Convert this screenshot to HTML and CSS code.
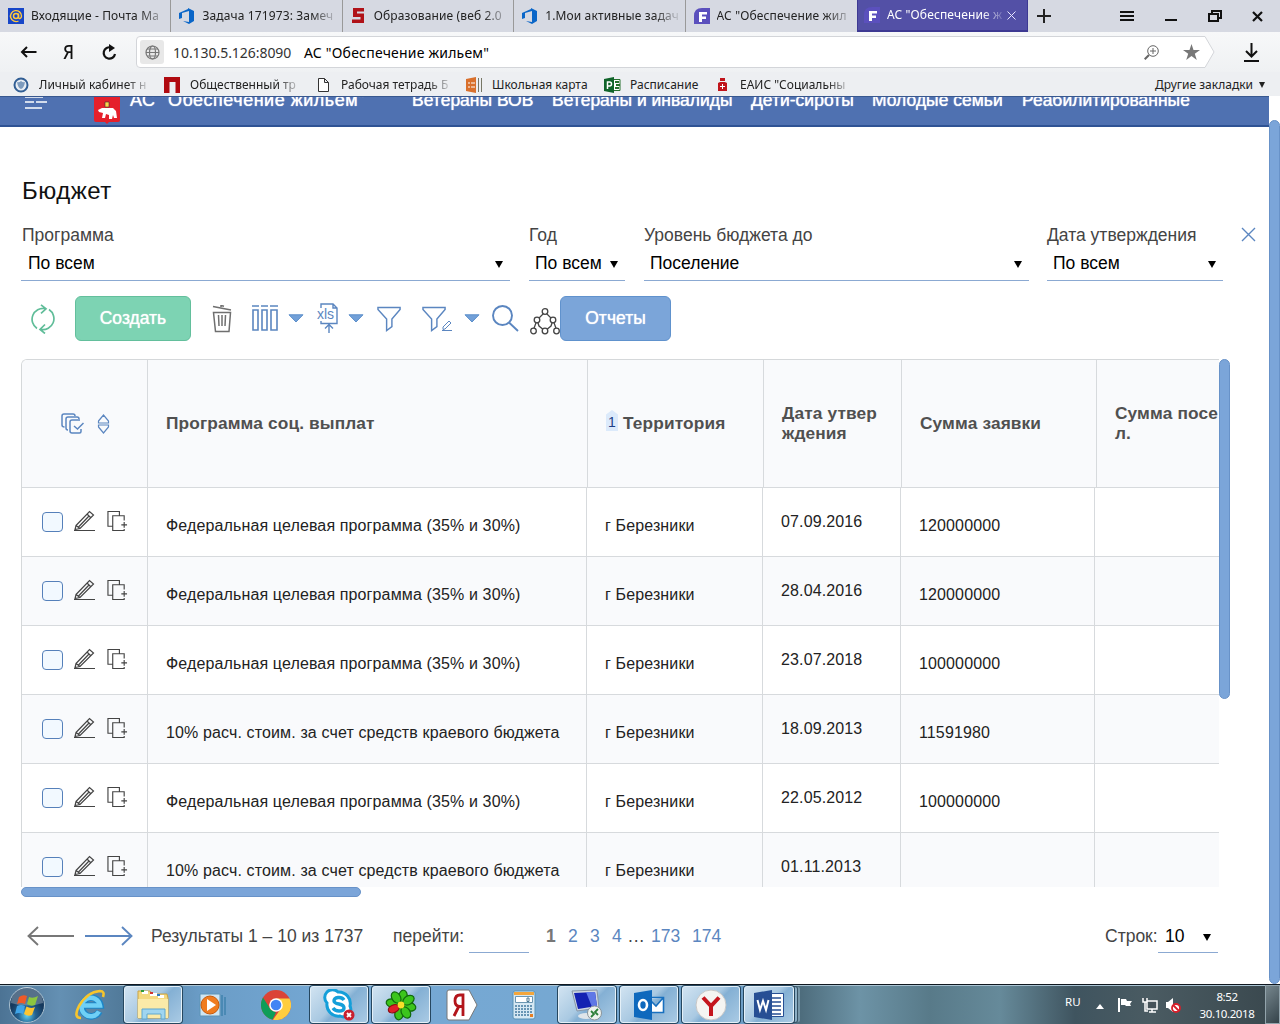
FILE: index.html
```html
<!DOCTYPE html>
<html lang="ru">
<head>
<meta charset="utf-8">
<title>АС "Обеспечение жильем"</title>
<link rel="stylesheet" href="styles.css">
</head>
<body>
<svg class="defs" width="0" height="0">
  <symbol id="i-devops" viewBox="0 0 16 16"><path fill="#0a66c8" d="M0 5 9 1V0l6 3v10l-5 3-6-3 6 1V3L3 5v5l-3 1z"/></symbol>
  <symbol id="i-f" viewBox="0 0 16 16"><path class="fbg" d="M0 16V8q0-8 8-8h8v16z"/><path fill="#fff" d="M5 4h8v2.500H8v2h4v2.500H8V14H5z"/></symbol>
  <symbol id="i-caret" viewBox="0 0 16 9"><path fill="#72a0d8" stroke="#5d8fcb" d="M1 .8h14L8 8z"/></symbol>
  <symbol id="i-funnel" viewBox="0 0 26 26"><path fill="none" stroke="#5b86c0" stroke-width="1.500" d="M1 1h23v2l-8.500 10v8L10 25V13L1 3z"/></symbol>
  <symbol id="i-edit" viewBox="0 0 22 22"><path fill="none" stroke="#444" stroke-width="1.200" d="M2 15.500 15.500 1.500l4 3.500L6 18.500l-5 1zM13 4l4 4M4.500 17 15 6M2 15.500l4 3M0 20.500h21"/></symbol>
  <symbol id="i-copy" viewBox="0 0 22 22"><path fill="none" stroke="#444" stroke-width="1.200" d="M6 16.500H1V1h12v4.500M18 10.500V5.500H6v15.500h9M18 12v6m-3-3h6M15 21h3v-1.500"/></symbol>
</svg>

<header class="browser">
  <div class="tabs">
    <div class="tab"><svg class="fav" viewBox="0 0 16 16"><path fill="#1746c8" d="M0 0h16v16H0z"/><circle cx="8" cy="8" r="2.500" fill="none" stroke="#ffc83c" stroke-width="1.500"/><path fill="none" stroke="#ffc83c" stroke-width="1.400" d="M10.500 5.500V9q0 1.600 1.500 1.500 1.500-.5 1.500-2.500a5.500 5.500 0 1 0-3 5"/></svg><span class="tab-text t1">Входящие - Почта Ма</span></div>
    <div class="tab"><svg class="fav"><use href="#i-devops"/></svg><span class="tab-text t2">Задача 171973: Замеч</span></div>
    <div class="tab"><svg class="fav" viewBox="0 0 16 16"><path fill="#b01218" d="M2 0h11v3.500H6v2h7V15H1v-3.500h8.500V9H2z"/></svg><span class="tab-text t3">Образование (веб 2.0</span></div>
    <div class="tab"><svg class="fav"><use href="#i-devops"/></svg><span class="tab-text t4">1.Мои активные задач</span></div>
    <div class="tab"><svg class="fav"><use href="#i-f"/></svg><span class="tab-text t5">АС "Обеспечение жил</span></div>
    <div class="tab active"><svg class="fav"><use href="#i-f"/></svg><span class="tab-text t6">АС "Обеспечение ж</span><svg class="tab-x" viewBox="0 0 9 9"><path stroke="#e8e6ff" d="m.5.5 8 8m0-8-8 8"/></svg></div>
    <svg class="tab-plus" viewBox="0 0 14 14"><path stroke="#222" stroke-width="2" d="M7 0v14M0 7h14"/></svg>
    <div class="win">
      <svg width="14" height="12" viewBox="0 0 14 12"><path stroke="#111" stroke-width="2" d="M0 2h14M0 6h14M0 10h14"/></svg>
      <svg width="12" height="12" viewBox="0 0 12 12"><path stroke="#111" stroke-width="2" d="M0 10h12"/></svg>
      <svg width="14" height="12" viewBox="0 0 14 12"><path fill="none" stroke="#111" stroke-width="2" d="M1 4h9v7H1zM4 4V1h9v7h-3"/></svg>
      <svg width="11" height="11" viewBox="0 0 11 11"><path stroke="#111" stroke-width="2.200" d="m1 1 9 9m0-9-9 9"/></svg>
    </div>
  </div>
  <div class="toolbar">
    <div class="nav">
      <svg width="17" height="12" viewBox="0 0 17 12"><path fill="none" stroke="#111" stroke-width="2" d="M16.500 6H2M7 1 2 6l5 5"/></svg>
      <span class="ya">Я</span>
      <svg width="16" height="17" viewBox="0 0 16 17"><path fill="none" stroke="#111" stroke-width="2.200" d="M10 3.500A5.700 5.700 0 1 0 14 10"/><path fill="#111" d="m8 0 6 4-6 4z"/></svg>
    </div>
    <div class="omni">
      <svg class="omni-bg" width="1079" height="32" viewBox="0 0 1079 32"><path fill="#fff" stroke="#d3d5d9" d="M4 .5h1065l9 15.500-9 15.500H4Q.5 31.500.5 28V4Q.5.500 4 .500z"/></svg>
      <span class="globe"><svg width="15" height="15" viewBox="0 0 15 15"><g fill="none" stroke="#777" stroke-width="1.200"><circle cx="7.500" cy="7.500" r="6.500"/><ellipse cx="7.500" cy="7.500" rx="3" ry="6.500"/><path d="M1 7.500h13M2 4h11M2 11h11"/></g></svg></span>
      <span class="url">10.130.5.126:8090</span>
      <span class="ptitle">АС "Обеспечение жильем"</span>
      <svg class="zoomer" width="15" height="15" viewBox="0 0 15 15"><g fill="none" stroke="#666"><circle cx="9" cy="6" r="5.300"/><path d="M9 3v6M6 6h6"/><path stroke-width="2" d="m5 10-4.300 4.300"/></g></svg>
      <svg class="star" width="17" height="16" viewBox="0 0 17 16"><path fill="#777" d="m8.500 0 2 6h6.500l-5.200 3.700 2 6.300-5.300-3.900L3.200 16l2-6.300L0 6h6.500z"/></svg>
    </div>
    <svg class="dl" width="15" height="19" viewBox="0 0 15 19"><path fill="none" stroke="#111" stroke-width="2" d="M7.500 0v13M2 8l5.500 5.500L13 8M0 18h15"/></svg>
  </div>
  <div class="marks">
    <div class="mark m1"><svg width="16" height="16" viewBox="0 0 16 16"><circle cx="8" cy="8" r="6.500" fill="#e8edf3" stroke="#315e94" stroke-width="2"/><path fill="#7d9bbd" d="M4 5q2 1 4-1 2 2 4 1-1 6-4 7-3-1-4-7z"/></svg><span class="mt">Личный кабинет н</span></div>
    <div class="mark m2"><svg width="16" height="16" viewBox="0 0 16 16"><path fill="#b00a10" d="M0 0h16v16h-4.500V5h-6v11H0z"/></svg><span class="mt">Общественный тр</span></div>
    <div class="mark m3"><svg width="11" height="14" viewBox="0 0 11 14"><path fill="#fff" stroke="#333" d="M.5.500h6l4 4v9H.5zM6.500.500v4h4"/></svg><span class="mt">Рабочая тетрадь Б</span></div>
    <div class="mark m4"><svg width="17" height="16" viewBox="0 0 17 16"><path fill="#d9702c" d="m0 2 10-2v16L0 14z"/><path stroke="#fff" d="M2 6h2m1 0h4M2 10h2m1 0h4"/><path stroke="#776" d="M12.500 1v14M15.500 1v14"/></svg><span class="mt">Школьная карта</span></div>
    <div class="mark m5"><svg width="17" height="16" viewBox="0 0 17 16"><path fill="#fff" stroke="#26702d" d="M9 2.500h7v11H9z"/><path stroke="#26702d" stroke-width="2" d="M11 5h4m-3 3h4m-5 3h4"/><path fill="#10642a" d="m0 2 10-2v16L0 14z"/><path fill="none" stroke="#fff" stroke-width="1.500" d="M3.500 12V5h2q2 0 2 2t-2 2h-2"/></svg><span class="mt">Расписание</span></div>
    <div class="mark m6"><svg width="9" height="14" viewBox="0 0 9 14"><path fill="#c0141b" d="M2 0h5v3H2zM0 5l2-1h5l2 1v8H0z"/><path stroke="#fff" d="M4.500 6v5M2 8.500h5"/></svg><span class="mt">ЕАИС "Социальны</span></div>
    <div class="mark other"><span class="mt">Другие закладки</span><svg width="6" height="6" viewBox="0 0 6 6"><path fill="#222" d="M0 0h6L3 6z"/></svg></div>
  </div>
</header>

<div class="viewport">
  <div class="page">
    <nav class="sitebar">
      <svg class="burger" width="22" height="13" viewBox="0 0 22 13"><path stroke="#fff" stroke-width="1.300" d="M0 1h18M0 6h9m2 0h11M0 12h17"/></svg>
      <svg class="crest" width="26" height="29" viewBox="0 0 26 29"><path fill="#e5202b" d="M0 0h26v24q0 2-2 2H15l-2 2-2-2H2q-2 0-2-2z"/><path fill="#ffd34a" stroke="#333" stroke-width=".6" d="M11 6h4v5h-4z"/><path fill="#fff" d="m4 14 4-2 11 0 3 3 1 7h-3l-1-3-1 4h-3v-4l-3-1-1 4H8l1-5-4-1z"/></svg>
      <span class="brand">АС "Обеспечение жильем"</span>
      <span class="ln l1">Ветераны ВОВ</span><span class="ln l2">Ветераны и инвалиды</span><span class="ln l3">Дети-сироты</span><span class="ln l4">Молодые семьи</span><span class="ln l5">Реабилитированные</span>
    </nav>
    <main>
      <h1>Бюджет</h1>
      <div class="filters">
        <div class="filter f1"><label>Программа</label><div class="sel"><span>По всем</span><i></i></div></div>
        <div class="filter f2"><label>Год</label><div class="sel"><span>По всем</span><i></i></div></div>
        <div class="filter f3"><label>Уровень бюджета до</label><div class="sel"><span>Поселение</span><i></i></div></div>
        <div class="filter f4"><label>Дата утверждения</label><div class="sel"><span>По всем</span><i></i></div></div>
        <svg class="close" width="15" height="15" viewBox="0 0 15 15"><path stroke="#5b86c0" stroke-width="1.400" d="m1 1 13 13m0-13L1 14"/></svg>
      </div>
      <div class="actions">
        <svg class="refresh" width="24" height="30" viewBox="0 0 24 30"><path fill="none" stroke="#60bd99" stroke-width="1.700" d="M6 24.500A11 11 0 0 1 14 4.500M10 .8l5 4-5 4.500M18 5.500a11 11 0 0 1-8 20M14 20.500l-5 5 5 4"/></svg>
        <button class="btn green">Создать</button>
        <svg class="trash" width="20" height="28" viewBox="0 0 20 28"><path fill="none" stroke="#6f6f6f" stroke-width="1.500" d="M1 1.500 19 5M9 2V.5l3 .8M1.500 7.500h17L17 26.500H3.500zM6.500 10l.5 11M10 10v11M13.500 10l-.5 11"/></svg>
        <svg class="cols" width="27" height="27" viewBox="0 0 27 27"><path fill="none" stroke="#5b86c0" stroke-width="1.600" d="M0 1h7m2 0h7m2 0h8M1 5h5v20H1zM10 5h5v20h-5zM19 5h6v20h-6z"/></svg>
        <svg class="car c1"><use href="#i-caret"/></svg>
        <svg class="xls" width="21" height="31" viewBox="0 0 21 31"><path fill="none" stroke="#5b86c0" stroke-width="1.400" d="M4 5V1h12l4 4v15.500H4V18M16 1v4h4M12 30v-8.500M8 25.500l4-4 4 4"/><text x="0" y="16" class="xt">xls</text></svg>
        <svg class="car c2"><use href="#i-caret"/></svg>
        <svg class="fun u1"><use href="#i-funnel"/></svg>
        <svg class="fun u2"><use href="#i-funnel"/></svg>
        <svg class="minied" width="11" height="11" viewBox="0 0 11 11"><path fill="none" stroke="#5b86c0" d="m1 7 6-6 2 2-6 6-2 .5zM0 10.500h10"/></svg>
        <svg class="car c3"><use href="#i-caret"/></svg>
        <svg class="lens" width="27" height="27" viewBox="0 0 27 27"><path fill="none" stroke="#5b86c0" stroke-width="1.900" d="M20 10.500a9.500 9.500 0 1 1-19 0 9.500 9.500 0 0 1 19 0zM17 17.500l9 8.500"/></svg>
        <svg class="tree" width="30" height="27" viewBox="0 0 30 27"><g fill="#fff" stroke="#444" stroke-width="1.300"><path fill="none" d="m15 4-8 8-4 11M15 4l8 8 4 11M7 12l2 6 6 5 6-5 2-6"/><circle cx="15" cy="3.500" r="2.800"/><circle cx="7" cy="12" r="2.800"/><circle cx="23" cy="12" r="2.800"/><circle cx="3.500" cy="23" r="2.800"/><circle cx="15" cy="23" r="2.800"/><circle cx="26.500" cy="23" r="2.800"/></g></svg>
        <button class="btn blue">Отчеты</button>
      </div>

      <div class="gridwrap">
        <div class="grid">
          <div class="row head">
            <div class="c tools"><svg width="23" height="22" viewBox="0 0 23 22"><path fill="none" stroke="#5b86c0" stroke-width="1.500" d="M3.500 14Q1 14 1 12V3q0-2 2-2h9q2 0 2 2M7 17q-2 0-2-2V6q0-2 2-2h9q2 0 2 2M20 16v2.500q0 1.500-1.500 1.500H11q-2 0-2-2V9q0-2 2-2h8M13 13l3.500 3 6-6"/></svg><svg class="sort" width="13" height="20" viewBox="0 0 13 20"><path fill="none" stroke="#5b86c0" stroke-width="1.200" d="M1.500 7 6.500 1l5 6v2h-10zM1.500 13l5 6 5-6v-2h-10z"/></svg></div>
            <div class="c prog">Программа соц. выплат</div>
            <div class="c terr"><span class="ord">1</span><span>Территория</span></div>
            <div class="c date">Дата утвер<br>ждения</div>
            <div class="c sum">Сумма заявки</div>
            <div class="c last">Сумма посе<br>л.</div>
          </div>
          <div class="row"><div class="c tools"><i class="cb"></i><svg><use href="#i-edit"/></svg><svg class="cp"><use href="#i-copy"/></svg></div><div class="c prog">Федеральная целевая программа (35% и 30%)</div><div class="c terr">г Березники</div><div class="c date">07.09.2016</div><div class="c sum">120000000</div><div class="c last"></div></div>
          <div class="row"><div class="c tools"><i class="cb"></i><svg><use href="#i-edit"/></svg><svg class="cp"><use href="#i-copy"/></svg></div><div class="c prog">Федеральная целевая программа (35% и 30%)</div><div class="c terr">г Березники</div><div class="c date">28.04.2016</div><div class="c sum">120000000</div><div class="c last"></div></div>
          <div class="row"><div class="c tools"><i class="cb"></i><svg><use href="#i-edit"/></svg><svg class="cp"><use href="#i-copy"/></svg></div><div class="c prog">Федеральная целевая программа (35% и 30%)</div><div class="c terr">г Березники</div><div class="c date">23.07.2018</div><div class="c sum">100000000</div><div class="c last"></div></div>
          <div class="row"><div class="c tools"><i class="cb"></i><svg><use href="#i-edit"/></svg><svg class="cp"><use href="#i-copy"/></svg></div><div class="c prog">10% расч. стоим. за счет средств краевого бюджета</div><div class="c terr">г Березники</div><div class="c date">18.09.2013</div><div class="c sum">11591980</div><div class="c last"></div></div>
          <div class="row"><div class="c tools"><i class="cb"></i><svg><use href="#i-edit"/></svg><svg class="cp"><use href="#i-copy"/></svg></div><div class="c prog">Федеральная целевая программа (35% и 30%)</div><div class="c terr">г Березники</div><div class="c date">22.05.2012</div><div class="c sum">100000000</div><div class="c last"></div></div>
          <div class="row"><div class="c tools"><i class="cb"></i><svg><use href="#i-edit"/></svg><svg class="cp"><use href="#i-copy"/></svg></div><div class="c prog">10% расч. стоим. за счет средств краевого бюджета</div><div class="c terr">г Березники</div><div class="c date">01.11.2013</div><div class="c sum"></div><div class="c last"></div></div>
        </div>
        <div class="vbar"></div>
      </div>
      <div class="hbar"></div>

      <div class="pager">
        <svg width="48" height="20" viewBox="0 0 48 20"><path fill="none" stroke="#777" stroke-width="1.900" d="M47 10H1M11 1 1.500 10l9.500 9"/></svg>
        <svg class="next" width="48" height="20" viewBox="0 0 48 20"><path fill="none" stroke="#5b86c0" stroke-width="1.900" d="M0 10h46M37 1l9.500 9-9.500 9"/></svg>
        <span class="res">Результаты 1 – 10 из 1737</span>
        <span class="go">перейти:</span><span class="inp"></span>
        <b>1</b><a>2</a><a>3</a><a>4</a><span class="dots">...</span><a class="p173">173</a><a class="p174">174</a>
        <span class="rows">Строк:</span><div class="sel rs"><span>10</span><i></i></div>
      </div>
    </main>
  </div>
  <div class="pagebar"><div class="thumb"></div></div>
</div>

<footer class="taskbar">
  <div class="start"><svg width="38" height="38" viewBox="0 0 38 38"><defs><radialGradient id="orb" cx=".5" cy=".8"><stop offset="0" stop-color="#5fd2f2"/><stop offset=".5" stop-color="#24618f"/><stop offset="1" stop-color="#16395d"/></radialGradient></defs><circle cx="19" cy="19" r="17.500" fill="url(#orb)" stroke="#a9c0cf"/><path fill="#fff" opacity=".28" d="M3 17a16 16 0 0 1 32 0q-16 5-32 0z"/><path fill="#ef5a28" d="M11 11q4-3 8-1l-2 8q-4-2-8 0z"/><path fill="#8dc63f" d="M21 11q4 2 9-1l-3 9q-4 2-8-1z"/><path fill="#3fa4e8" d="M9 20q4-2 8 0l-2 8q-4-2-8 0z"/><path fill="#fdc52f" d="M18.500 20.500q4 2.500 8.500.5l-3 8q-4 2-8-1z"/></svg></div>
  <div class="task"><svg width="32" height="32" viewBox="0 0 32 32"><g fill="none"><path stroke="#1c86c8" stroke-width="6.500" d="M25.500 22.500a9.300 9.300 0 1 1 1-6H9"/><path stroke="#6fd0f6" stroke-width="4.500" d="M25 22.500a9.300 9.300 0 1 1 1-6H9"/><path stroke="#f7c52c" stroke-width="2.600" d="M7 29q-8 0-2-12Q13 3 26 2q5 0 3 6"/></g></svg></div>
  <div class="task on"><svg width="34" height="32" viewBox="0 0 34 32"><path fill="#f4d97f" stroke="#c9a347" d="M2 6V2h12l2 3h15l1 4v20H2z"/><path fill="#fff" d="M6 2h6v3H6zM14 4h7v3h-7zM22 6h6v3h-6z"/><path fill="#2e9c3b" d="M5 1h3v2H5z"/><path fill="#d2342f" d="M14 3h3v2h-3z"/><path fill="#2e7bc0" d="M21 5h3v2h-3z"/><path fill="#fbeaa8" d="M2 10h30v19H2z"/><path fill="#9fd5f0" stroke="#5fa7cf" d="M6 30V20h23v10h-4v-5H11v5z"/></svg></div>
  <div class="task"><svg width="30" height="28" viewBox="0 0 30 28"><path fill="#cfe6f3" stroke="#5d94b6" d="M1 3h20v22H1z"/><path stroke="#3f82ad" stroke-width="1.500" d="M23 4v21M26 6v18"/><circle cx="11" cy="14" r="9" fill="#f07c1f" stroke="#c65a0d"/><path fill="#fff" d="m8 8 9 6-9 6z"/></svg></div>
  <div class="task"><svg width="30" height="30" viewBox="0 0 30 30"><circle cx="15" cy="15" r="15" fill="#db4437"/><path fill="#0f9d58" d="M2 7.500 10 20l5 2.500L11.500 29.600A15 15 0 0 1 2 7.500z"/><path fill="#ffcd40" d="M15 8.500h13.500A15 15 0 0 1 12 29.700L19 20z"/><circle cx="15" cy="15" r="6.800" fill="#fff"/><circle cx="15" cy="15" r="5.300" fill="#4285f4"/></svg></div>
  <div class="task on"><svg width="32" height="32" viewBox="0 0 32 32"><path fill="#fff" stroke="#159fd9" stroke-width="3" d="M15 3a11.500 11.500 0 0 1 12 14 7.500 7.500 0 0 1-10 10A11.500 11.500 0 0 1 4 14 7.500 7.500 0 0 1 15 3z"/><path fill="none" stroke="#159fd9" stroke-width="3.400" d="M21 11q-2-3-6-2.500-4 .5-4 3.500 0 2 5 3t5 4q0 3-5 3-4 0-6-3"/><circle cx="26" cy="26" r="5.500" fill="#c8202f"/><path stroke="#fff" stroke-width="1.800" d="m24 24 4 4m0-4-4 4"/></svg></div>
  <div class="task on"><svg width="32" height="32" viewBox="0 0 34 34"><g fill="#3cc51c" stroke="#11690c" stroke-width="1.300" transform="rotate(12 17 17)"><ellipse cx="17" cy="7.500" rx="4.500" ry="6.500"/><ellipse cx="17" cy="26.500" rx="4.500" ry="6.500"/><ellipse cx="26.500" cy="17" rx="6.500" ry="4.500"/><ellipse cx="7.500" cy="17" rx="6.500" ry="4.500"/><ellipse cx="10.300" cy="10.300" rx="4.500" ry="6.500" transform="rotate(-45 10.300 10.300)"/><ellipse cx="23.700" cy="10.300" rx="4.500" ry="6.500" transform="rotate(45 23.700 10.300)"/><ellipse cx="23.700" cy="23.700" rx="4.500" ry="6.500" transform="rotate(-45 23.700 23.700)"/><ellipse cx="10.300" cy="22.500" rx="4" ry="6" transform="rotate(55 10.300 22.500)" fill="#e0202a" stroke="#8d0c10"/></g><circle cx="17" cy="17" r="3.600" fill="#f6df2a"/></svg></div>
  <div class="task"><svg width="32" height="32" viewBox="0 0 32 32"><path fill="#fff" stroke="#777" d="M3 1h20l8 15-8 15H3q-2 0-2-2V3q0-2 2-2z"/><path fill="none" stroke="#b3151b" stroke-width="2.800" d="M17 27V6h-3q-5 0-5 6 0 5.500 5 5.500h3M13 17 8 27"/></svg></div>
  <div class="task"><svg width="24" height="30" viewBox="0 0 24 30"><rect x="1" y="1" width="22" height="28" rx="2" fill="#d6e8f3" stroke="#5993b7"/><path fill="#f3a63c" d="M2 2h20v3H2z"/><path fill="#fff" stroke="#6c97b2" d="M3.500 6.500h17v6h-17z"/><path fill="none" stroke="#4a7893" d="M15 8h2v3.500h-2z"/><path stroke="#6895b4" stroke-width="2" stroke-dasharray="2 1" d="M3 16h18M3 19h18M3 22h18M3 25h14"/><path fill="#e77f22" d="M18 24h3v3h-3z"/></svg></div>
  <div class="task on"><svg width="32" height="32" viewBox="0 0 32 32"><path fill="#cfd8e2" stroke="#8795a5" d="m1 2 25-1 2 18-22 3z"/><path fill="#1422b2" d="m3 4 21-1 2 14-19 3z"/><path fill="#5f78e6" d="m15 3 9 0 2 14-5 1z"/><ellipse cx="15" cy="27" rx="8" ry="3" fill="#dfe5ea"/><circle cx="23.500" cy="24" r="7" fill="#eef3ee" stroke="#8a949b"/><path fill="none" stroke="#2d7f39" stroke-width="1.800" d="m20 22 3 3-3 3M27 20l-3 3 3 3"/></svg></div>
  <div class="task on"><svg width="32" height="32" viewBox="0 0 32 32"><path fill="#fff" stroke="#1870bf" stroke-width="1.600" d="M16 8.500h14.500v15H16zM16 10l7 7 7-8"/><path fill="#0f69bd" d="m1 4 18-3v30L1 28z"/><ellipse cx="10" cy="16" rx="4" ry="5" fill="none" stroke="#fff" stroke-width="2.600"/></svg></div>
  <div class="task on"><svg width="32" height="32" viewBox="0 0 32 32"><circle cx="16" cy="16" r="15" fill="#f4f4f2" stroke="#c7c7c7"/><path fill="none" stroke="#c4151d" stroke-width="4" d="m8 8.500 8 8.500 8-8.500M16 16v11"/></svg></div>
  <div class="task on stack"><svg width="32" height="32" viewBox="0 0 32 32"><path fill="#fff" stroke="#274f94" d="M16 4.500h14.500v23H16z"/><path stroke="#274f94" stroke-width="1.500" d="M19 9h9M19 13h9M19 17h9M19 21h9M19 25h9"/><path fill="#274f94" d="m1 4 18-3v30L1 28z"/><path fill="none" stroke="#fff" stroke-width="2" d="m4.500 11 2.500 10 3-9 3 9 2.500-10"/></svg></div>
  <div class="tray">
    <span class="lang">RU</span>
    <svg width="8" height="5" viewBox="0 0 8 5"><path fill="#fff" d="m0 5 4-5 4 5z"/></svg>
    <svg class="flag" width="16" height="16" viewBox="0 0 16 16"><path fill="#fff" d="M1 1h2v14H1zM4 2h5l1 2h5l-2 3 1 2H9L8 8H4z"/></svg>
    <svg class="net" width="16" height="16" viewBox="0 0 16 16"><path fill="#46535a" stroke="#fff" stroke-width="1.500" d="M5 4h10v8H5zM7 15h7M10 12v3M1 1v4h4V1M3 5v9h3"/></svg>
    <svg class="vol" width="16" height="16" viewBox="0 0 16 16"><path fill="#fff" d="M1 5h2l5-4v14l-5-4H1z"/><circle cx="11" cy="11" r="4" fill="#fff" stroke="#d8202b" stroke-width="1.800"/><path stroke="#d8202b" stroke-width="1.800" d="m8 8 6 6"/></svg>
    <div class="clock"><span>8:52</span><span>30.10.2018</span></div>
  </div>
  <div class="peek"></div>
</footer>
</body>
</html>
```
FILE: styles.css
```css
* { box-sizing: border-box; }
body { margin: 0; width: 1280px; height: 1024px; overflow: hidden; display: flex; flex-direction: column; background: #fff; font-family: "Liberation Sans", Arial, sans-serif; }
svg { display: block; flex: none; }
.defs { position: absolute; }

/* browser chrome */
.browser { height: 96px; flex: none; font-family: "Noto Sans", sans-serif; color: #222; background: #edeff2; }
.tabs { display: flex; height: 32px; background: #d6d9e2; align-items: center; }
.tab { width: 171.400px; height: 32px; padding-left: 8px; display: flex; align-items: center; border-right: 1px solid #999; flex: none; }
.fav { width: 16px; height: 16px; }
.fbg { fill: #5b50bd; }
.active .fav { fill: #7a76ee; margin-left: -2px; }
.tab-text { margin-left: 7px; width: 133px; font-size: 12px; line-height: 18px; letter-spacing: .13px; white-space: nowrap; -webkit-mask-image: linear-gradient(90deg, #000 82%, rgba(0,0,0,.15)); mask-image: linear-gradient(90deg, #000 82%, rgba(0,0,0,.15)); }
.tab:nth-child(5) { border-right: 0; }
.tab.active { background: #5350a6; color: #fff; border: 1px solid #3d3992; border-width: 0 1px 2px; }
.tab.active .tab-text { width: 116px; }
.tab-x { width: 9px; height: 9px; margin-left: 4px; }
.tab-plus { width: 14px; height: 14px; margin-left: 9px; }
.win { margin-left: auto; margin-right: 17px; display: flex; align-items: center; gap: 31px; }
.win svg:nth-child(3) { margin-right: -1px; }
.toolbar { display: flex; height: 40px; align-items: center; background: linear-gradient(#f7f8f9, #eff1f3); }
.nav { width: 136px; padding-left: 20px; display: flex; align-items: center; }
.ya { margin: 0 26px 0 25px; font-size: 20px; font-weight: 500; line-height: 24px; color: #111; transform: scaleX(.85); }
.omni { width: 1079px; height: 32px; display: flex; align-items: center; position: relative; font-size: 14px; }
.omni-bg { position: absolute; inset: 0; }
.omni > * { z-index: 1; }
.omni > .omni-bg { z-index: 0; }
.globe { width: 24px; height: 24px; margin-left: 4px; border-radius: 3px; background: #e8e8e8; display: flex; align-items: center; justify-content: center; }
.url { margin-left: 9px; width: 131px; color: #333; letter-spacing: -.05px; }
.ptitle { color: #000; letter-spacing: .2px; white-space: nowrap; }
.zoomer { margin-left: auto; }
.star { margin: 0 15px 0 24px; }
.dl { margin-left: 29px; }
.marks { display: flex; height: 24px; align-items: center; font-size: 12px; }
.mark { display: flex; align-items: center; flex: none; height: 24px; padding-top: 1px; }
.mt { white-space: nowrap; line-height: 18px; }
.m1 { width: 151px; padding-left: 13px; gap: 10px; }
.m2 { width: 166px; padding-left: 13px; gap: 10px; }
.m3 { width: 149px; padding-left: 1px; gap: 12px; }
.m4 { width: 138px; gap: 9px; }
.m5 { width: 114px; gap: 9px; }
.m6 { width: 140px; gap: 13px; }
.m1 .mt, .m2 .mt, .m3 .mt, .m6 .mt { width: 109px; -webkit-mask-image: linear-gradient(90deg, #000 80%, rgba(0,0,0,.15)); mask-image: linear-gradient(90deg, #000 80%, rgba(0,0,0,.15)); }
.other { margin-left: auto; margin-right: 15px; gap: 6px; }

/* web page */
.viewport { height: 888px; flex: none; display: flex; overflow: hidden; }
.page { width: 1269px; }
.pagebar { width: 11px; padding-top: 24px; }
.thumb { height: 864px; background: #7ba5d9; border: 1px solid #6892c8; border-radius: 6px; }
.sitebar { height: 31px; background: #4f71b1; border-top: 1px solid #38588f; border-bottom: 2px solid #2f5394; color: #fff; display: flex; font-size: 17.500px; line-height: 20px; overflow: hidden; white-space: nowrap; text-shadow: 0 0 1px #fff; }
.sitebar > * { flex: none; }
.burger { margin-left: 25px; margin-top: -1px; }
.crest { margin-left: 47px; margin-top: -1px; }
.brand { margin: -7px 0 0 10px; width: 282px; font-size: 18px; letter-spacing: .5px; }
.ln { margin-top: -7px; }
.l1 { width: 140px; } .l2 { width: 199px; } .l3 { width: 121px; } .l4 { width: 150px; }
main { padding-left: 21px; }
h1 { margin: 50px 0 0 1px; font-size: 24px; line-height: 28px; font-weight: 400; letter-spacing: .5px; color: #111; }
.filters { display: flex; height: 57px; margin-top: 19px; font-size: 17.500px; }
.filter { display: flex; flex-direction: column; height: 57px; flex: none; }
.filter label { line-height: 22px; color: #444; padding-left: 1px; white-space: nowrap; }
.sel { display: flex; justify-content: space-between; align-items: center; height: 35px; padding: 1px 7px 0 7px; border-bottom: 1px solid #8ba9d2; color: #000; }
.sel i { width: 0; height: 0; border: 4px solid transparent; border-top: 7px solid #000; border-bottom: 0; margin-top: 2px; }
.f1 { width: 489px; } .f2 { width: 96px; margin-left: 19px; } .f3 { width: 385px; margin-left: 19px; } .f4 { width: 176px; margin-left: 18px; }
.f2 label, .f3 label, .f4 label { padding-left: 0; }
.f2 .sel, .f3 .sel, .f4 .sel { padding-left: 6px; }
.close { margin: 3px 0 0 18px; }
.actions { display: flex; align-items: center; height: 45px; margin-top: 15px; }
.refresh { margin-left: 10px; }
.btn { height: 45px; border-radius: 6px; color: #fff; font: 17.500px "Liberation Sans", Arial, sans-serif; padding: 0; text-shadow: 0 0 1px #fff; }
.green { width: 116px; margin-left: 20px; background: #7dd3b3; border: 1px solid #63bf9c; }
.blue { width: 111px; background: #7ba5d9; border: 1px solid #6092cd; }
.trash { margin-left: 21px; }
.cols { margin-left: 20px; }
.car { width: 16px; height: 9px; }
.c1 { margin-left: 9px; }
.xls { margin-left: 13px; overflow: visible; }
.xt { font: 14px "Liberation Sans", Arial, sans-serif; fill: #5b86c0; }
.c2 { margin-left: 10px; }
.fun { width: 25px; height: 26px; }
.u1 { margin-left: 13px; } .u2 { margin-left: 20px; }
.minied { margin: 13px 0 0 -5px; }
.c3 { margin-left: 11px; }
.lens { margin-left: 12px; }
.tree { margin: 6px 0 0 11px; }

/* data grid */
.gridwrap { display: flex; align-items: flex-start; margin-top: 18px; height: 528px; }
.grid { width: 1198px; height: 528px; overflow: hidden; border: 1px solid #d5d8da; border-width: 1px 0 0 1px; border-top-left-radius: 6px; }
.row { display: grid; grid-template-columns: 126px 439px 176px 138px 194px 1fr; height: 69px; border-bottom: 1px solid #d7dadd; font-size: 16px; color: #222; }
.row:nth-child(odd) { background: #f9fafc; }
.head { grid-template-columns: 126px 440px 176px 138px 195px 1fr; height: 128px; font-size: 17.300px; font-weight: 700; line-height: 20px; color: #505050; }
.c { border-right: 1px solid #d7dadd; padding: 8px 0 0 18px; display: flex; align-items: center; white-space: nowrap; overflow: hidden; letter-spacing: .13px; }
.head .c { padding-top: 0; padding-bottom: 2px; }
.head .tools { padding-bottom: 0; }
.c.last { border-right: 0; }
.row .c.date { padding-top: 0; padding-bottom: 1px; }
.row .tools { padding: 0 0 0 20px; }
.head .tools { padding-left: 39px; }
.sort { margin-left: 13px; }
.cb { width: 21px; height: 20px; border: 1px solid #5580ba; border-radius: 4px; background: #f2f9ff; flex: none; }
.tools svg:not([width]) { width: 22px; height: 22px; margin-left: 11px; margin-top: -2px; }
.tools svg.cp { width: 21px; margin-left: 11px; }
.ord { width: 12px; height: 21px; margin-left: 0; font-size: 14px; font-weight: 400; line-height: 24px; color: #1d3f86; background: #dceafb; margin-right: 5px; margin-bottom: 4px; text-align: center; clip-path: polygon(50% 0, 100% 22%, 100% 100%, 0 100%, 0 22%); }
.vbar { width: 11px; height: 340px; background: #7ba5d9; border: 1px solid #6892c8; border-radius: 6px; }
.hbar { width: 340px; height: 10px; background: #7ba5d9; border: 1px solid #6892c8; border-radius: 5px; }

.pager { display: flex; align-items: center; height: 34px; margin-top: 22px; padding-left: 6px; font-size: 17.500px; color: #444; white-space: nowrap; }
.next { margin-left: 10px; }
.res { margin-left: 18px; width: 242px; }
.go { width: 76px; }
.inp { width: 60px; height: 34px; border-bottom: 1px solid #8ba9d2; margin-right: 17px; }
.pager b { width: 22px; color: #777; }
.pager a { width: 22px; color: #5b86c0; }
.pager a:nth-of-type(3) { width: 16px; }
.dots { width: 23px; letter-spacing: .8px; }
.pager .p173 { width: 41px; }
.pager .p174 { width: 30px; }
.rows { margin-left: 383px; width: 53px; }
.rs { width: 60px; height: 34px; }

/* desktop taskbar */
.taskbar { height: 40px; flex: none; display: flex; border-top: 1px solid #101820; box-shadow: inset 0 1px #a9c3d2; color: #fff; background: linear-gradient(90deg, #4c7394 0, #6490b3 60px, #527b9b 120px, #6a9cc6 200px, #75a8d4 330px, #76a8d2 560px, #6b9cc4 780px, #4d6c7c 800px, #6d93a6 860px, #587a89 930px, #668a9a 1000px, #3f545f 1075px, #4a5b62 1150px, #39474d 1280px); }
.start { width: 60px; padding-left: 8px; padding-top: 1px; flex: none; }
.task { width: 59px; margin-right: 3px; height: 39px; display: flex; align-items: center; justify-content: center; flex: none; }
.task.on { border: 1px solid #e4f0f8; border-radius: 3px; background: linear-gradient(135deg, #d1e3f1 0, #a9c9e2 45%, #84b0d4 55%, #a9cae4 100%); box-shadow: 0 0 0 1px #26475f; width: 58px; margin: 1px 4px 0 0; height: 37px; transform: translateX(2px); }
.start + .task ~ .task.on { transform: none; margin: 1px 2px 0 2px; }
.taskbar .task.stack { width: 50px; margin-right: 7px; box-shadow: 0 0 0 1px #26475f, 4px 0 0 -1px #8db0c6, 4px 0 0 0 #375366, 7px 0 0 -1px #7999ab; }
.tray { margin-left: auto; display: flex; align-items: center; font: 11.500px "Noto Sans", sans-serif; }
.lang { width: 28px; margin-top: -6px; }
.tray .lang + svg { margin-left: 3px; margin-top: 3px; }
.flag { margin-left: 13px; }
.net { margin-left: 9px; }
.vol { margin-left: 7px; }
.clock { width: 76px; margin-left: 8px; margin-right: 0; display: flex; flex-direction: column; align-items: center; line-height: 17px; letter-spacing: -.4px; }
.peek { width: 15px; height: 39px; border: 1px solid #93a4ac; background: linear-gradient(135deg, #76868d, #35434a); flex: none; }
```
